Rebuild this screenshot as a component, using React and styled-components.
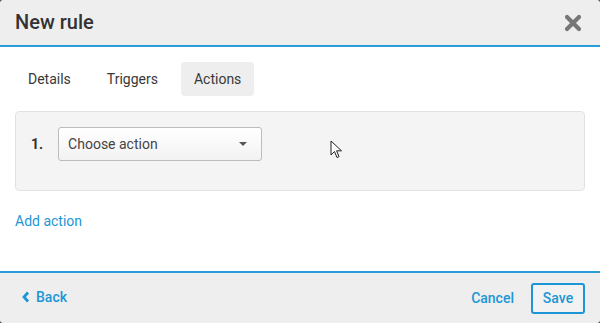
import styled, { createGlobalStyle } from 'styled-components';

const GlobalStyle = createGlobalStyle`
  html, body {
    margin: 0;
    padding: 0;
    background: #5a5a5a;
  }
  body {
    font-family: Roboto, "Liberation Sans", Arial, sans-serif;
  }
`;

const Dialog = styled.div`
  width: 600px;
  height: 323px;
  background: #ffffff;
  border-radius: 4px;
  overflow: hidden;
  display: flex;
  flex-direction: column;
  position: relative;
`;

const Header = styled.div`
  height: 45px;
  background: #eeeeee;
  border-bottom: 2px solid #2a9cd8;
  display: flex;
  align-items: center;
  justify-content: space-between;
  padding: 0 17px 0 15px;
  flex-shrink: 0;
`;

const Title = styled.h1`
  margin: 0 0 1px;
  font-size: 20px;
  font-weight: 500;
  color: #333333;
`;

const CloseButton = styled.button`
  border: none;
  background: none;
  padding: 0;
  width: 20px;
  height: 20px;
  display: flex;
  align-items: center;
  justify-content: center;
  cursor: pointer;
`;

const Body = styled.div`
  flex: 1;
  padding: 15px 15px 0;
  display: flex;
  flex-direction: column;
`;

const Tabs = styled.div`
  display: flex;
  gap: 10px;
`;

const Tab = styled.div`
  height: 34px;
  display: flex;
  align-items: center;
  padding: 0 13px;
  border-radius: 4px;
  font-size: 14px;
  color: #383838;
  background: ${(p) => (p.active ? '#eeeeee' : 'transparent')};
`;

const Panel = styled.div`
  margin-top: 15px;
  height: 78px;
  background: #f4f4f4;
  border: 1px solid #e2e2e2;
  border-radius: 4px;
  padding: 0 15px;
  position: relative;
`;

const ActionRow = styled.div`
  display: flex;
  align-items: center;
  gap: 15px;
  margin-top: 15px;
`;

const Number = styled.span`
  font-size: 14px;
  font-weight: 700;
  color: #333333;
`;

const Select = styled.div`
  box-sizing: border-box;
  width: 204px;
  height: 34px;
  border: 1px solid #bcbcbc;
  border-radius: 3px;
  background: linear-gradient(#ffffff, #f2f2f2);
  display: flex;
  align-items: center;
  justify-content: space-between;
  padding: 0 14px 0 9px;
  font-size: 14px;
  color: #444444;
`;

const Caret = styled.span`
  width: 0;
  height: 0;
  border-left: 4px solid transparent;
  border-right: 4px solid transparent;
  border-top: 4px solid #555555;
`;

const Pointer = styled.svg`
  position: absolute;
  left: 314px;
  top: 28px;
`;

const AddLink = styled.a`
  margin-top: 20px;
  font-size: 14px;
  line-height: 20px;
  color: #1c96d6;
  text-decoration: none;
  align-self: flex-start;
`;

const Footer = styled.div`
  height: 50px;
  background: #eeeeee;
  border-top: 2px solid #2a9cd8;
  display: flex;
  align-items: center;
  justify-content: space-between;
  padding: 0 15px 0 22px;
  flex-shrink: 0;
`;

const BackLink = styled.a`
  display: flex;
  align-items: center;
  gap: 6px;
  font-size: 14px;
  font-weight: 500;
  color: #1c96d6;
  margin-top: -2px;
`;

const Actions = styled.div`
  display: flex;
  align-items: center;
  gap: 17px;
`;

const TextButton = styled.button`
  border: none;
  background: none;
  font-family: inherit;
  font-size: 14px;
  font-weight: 500;
  color: #1c96d6;
  padding: 0;
`;

const SaveButton = styled.button`
  height: 31px;
  width: 54px;
  border: 2px solid #1c96d6;
  border-radius: 3px;
  background: #f2f2f2;
  font-family: inherit;
  font-size: 14px;
  font-weight: 500;
  color: #1c96d6;
  padding: 0;
`;

const App = () => {
  return (
    <>
      <GlobalStyle />
      <Dialog>
        <Header>
          <Title>New rule</Title>
          <CloseButton>
            <svg width="18" height="18" viewBox="0 0 18 18">
              <path d="M3 3 L15 15 M15 3 L3 15" stroke="#777777" strokeWidth="4.2" strokeLinecap="round" />
            </svg>
          </CloseButton>
        </Header>
        <Body>
          <Tabs>
            <Tab>Details</Tab>
            <Tab>Triggers</Tab>
            <Tab active>Actions</Tab>
          </Tabs>
          <Panel>
            <ActionRow>
              <Number>1.</Number>
              <Select>
                Choose action
                <Caret />
              </Select>
            </ActionRow>
            <Pointer width="13" height="20" viewBox="0 0 13 20">
              <path d="M1 1 L1 15 L4.5 11.5 L7 17.5 L9 16.6 L6.6 10.8 L11.5 10.8 Z" fill="#ffffff" stroke="#222222" strokeWidth="1" strokeLinejoin="round" />
            </Pointer>
          </Panel>
          <AddLink>Add action</AddLink>
        </Body>
        <Footer>
          <BackLink>
            <svg width="8" height="12" viewBox="0 0 8 12">
              <path d="M6 1.5 L2 6 L6 10.5" stroke="#1c96d6" strokeWidth="2.8" fill="none" />
            </svg>
            Back
          </BackLink>
          <Actions>
            <TextButton>Cancel</TextButton>
            <SaveButton>Save</SaveButton>
          </Actions>
        </Footer>
      </Dialog>
    </>
  );
};

export default App;
